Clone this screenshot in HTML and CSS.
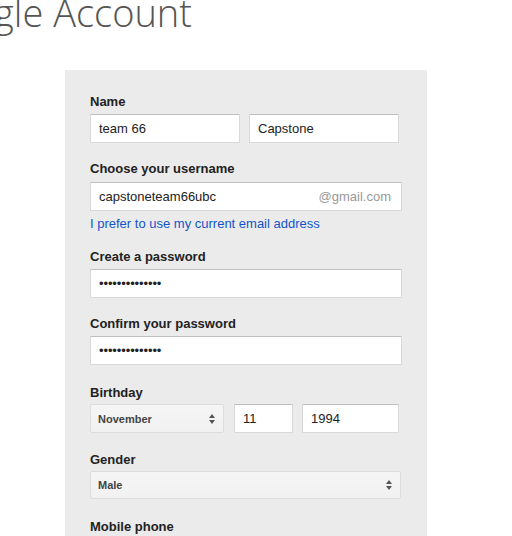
FILE: index.html
```html
<!DOCTYPE html>
<html>
<head>
<meta charset="utf-8">
<link rel="stylesheet" href="styles.css">
</head>
<body>
<header class="head">
  <h1 class="title">Create your Google Account</h1>
</header>
<main class="panel">
  <div class="field f-name">
    <div class="label">Name</div>
    <div class="row">
      <div class="input half">team 66</div>
      <div class="input half">Capstone</div>
    </div>
  </div>
  <div class="field f-user">
    <div class="label lbl5">Choose your username</div>
    <div class="input full user"><span>capstoneteam66ubc</span><span class="suffix">@gmail.com</span></div>
    <a class="link" href="#">I prefer to use my current email address</a>
  </div>
  <div class="field f-pass">
    <div class="label">Create a password</div>
    <div class="input full"><span class="dots">••••••••••••••</span></div>
  </div>
  <div class="field f-confirm">
    <div class="label">Confirm your password</div>
    <div class="input full"><span class="dots">••••••••••••••</span></div>
  </div>
  <div class="field f-birth">
    <div class="label lbl3">Birthday</div>
    <div class="row birth">
      <div class="select month"><span>November</span><span class="arrows"><i class="up"></i><i class="down"></i></span></div>
      <div class="input day">11</div>
      <div class="input year">1994</div>
    </div>
  </div>
  <div class="field f-gender">
    <div class="label lbl3">Gender</div>
    <div class="select gender"><span>Male</span><span class="arrows"><i class="up"></i><i class="down"></i></span></div>
  </div>
  <div class="field">
    <div class="label">Mobile phone</div>
  </div>
</main>
</body>
</html>
```
FILE: styles.css
```css
html, body {
  margin: 0;
  padding: 0;
  background: #fff;
  overflow: hidden;
  font-family: Arial, "Liberation Sans", Helvetica, sans-serif;
}
.head {
  width: 192px;
  height: 44px;
  display: flex;
  justify-content: flex-end;
}
.title {
  margin: -10px 0 0 0;
  white-space: nowrap;
  font-family: "Open Sans", sans-serif;
  font-weight: 300;
  font-size: 38px;
  line-height: 44px;
  color: #555;
  flex-shrink: 0;
}
.panel {
  margin: 26px 0 0 65px;
  width: 312px;
  padding: 23px 25px 40px;
  background: #ebebeb;
}
.field { margin-bottom: 17px; }
.f-user { margin-bottom: 16px; }
.f-confirm { margin-bottom: 19px; }
.f-birth { margin-bottom: 18px; }
.f-gender { margin-bottom: 19px; }
.label {
  font-size: 13px;
  font-weight: bold;
  line-height: 17px;
  color: #222;
  margin-bottom: 4px;
}
.lbl5 { margin-bottom: 5px; }
.lbl3 { margin-bottom: 3px; }
.row {
  display: flex;
  gap: 9px;
}
.input {
  box-sizing: border-box;
  height: 29px;
  background: #fff;
  border: 1px solid #d9d9d9;
  border-top-color: #c0c0c0;
  border-radius: 1px;
  padding: 0 8px;
  font-size: 13px;
  line-height: 27px;
  color: #222;
  display: flex;
  align-items: center;
}
.half { width: 150px; }
.full { width: 312px; }
.user { justify-content: space-between; padding-right: 10px; }
.suffix { color: #999; }
.dots { font-size: 13px; letter-spacing: -0.1px; color: #222; }
.link {
  display: block;
  margin-top: 4px;
  font-size: 13px;
  line-height: 17px;
  color: #15c;
  text-decoration: none;
}
.select {
  box-sizing: border-box;
  height: 29px;
  border: 1px solid #dcdcdc;
  border-radius: 2px;
  background: linear-gradient(#f5f5f5, #f1f1f1);
  padding: 0 8px 0 7px;
  font-size: 11px;
  font-weight: bold;
  color: #444;
  display: flex;
  align-items: center;
  justify-content: space-between;
}
.month { width: 134px; margin-right: 1px; }
.day { width: 59px; }
.year { width: 97px; }
.gender { width: 311px; height: 28px; }
.arrows {
  display: flex;
  flex-direction: column;
  gap: 2px;
}
.arrows i {
  display: block;
  width: 0;
  height: 0;
  border-left: 3.5px solid transparent;
  border-right: 3.5px solid transparent;
}
.arrows .up { border-bottom: 4px solid #555; }
.arrows .down { border-top: 4px solid #555; }
```
